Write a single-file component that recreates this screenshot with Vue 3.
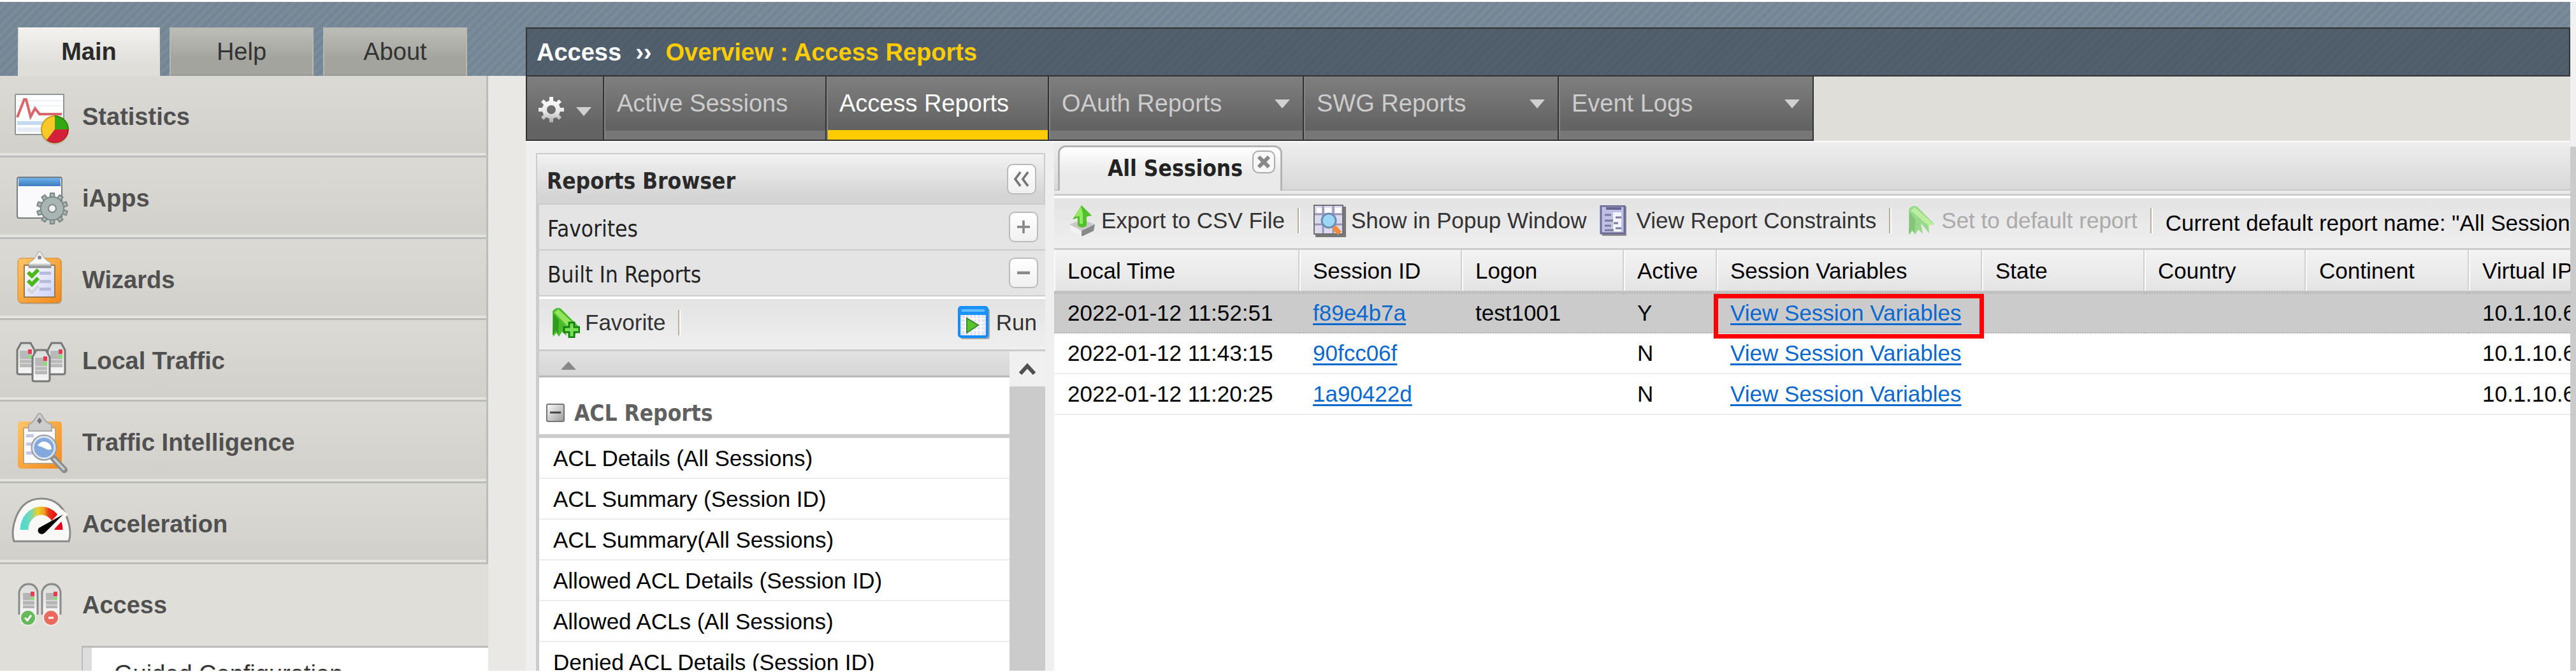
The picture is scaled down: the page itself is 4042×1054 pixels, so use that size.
<script setup>
const tabs = ['Main', 'Help', 'About']
const menu = [
  { id: 'statistics', label: 'Statistics' },
  { id: 'iapps', label: 'iApps' },
  { id: 'wizards', label: 'Wizards' },
  { id: 'local', label: 'Local Traffic' },
  { id: 'intelligence', label: 'Traffic Intelligence' },
  { id: 'acceleration', label: 'Acceleration' },
  { id: 'access', label: 'Access' }
]
const nav = [
  { label: 'Active Sessions' },
  { label: 'Access Reports', current: true },
  { label: 'OAuth Reports', menu: true },
  { label: 'SWG Reports', menu: true },
  { label: 'Event Logs', menu: true }
]
const reports = [
  'ACL Details (All Sessions)',
  'ACL Summary (Session ID)',
  'ACL Summary(All Sessions)',
  'Allowed ACL Details (Session ID)',
  'Allowed ACLs (All Sessions)',
  'Denied ACL Details (Session ID)'
]
const columns = [
  { label: 'Local Time', width: 385 },
  { label: 'Session ID', width: 255 },
  { label: 'Logon', width: 254 },
  { label: 'Active', width: 146 },
  { label: 'Session Variables', width: 416 },
  { label: 'State', width: 255 },
  { label: 'Country', width: 253 },
  { label: 'Continent', width: 256 },
  { label: 'Virtual IP', width: 255 }
]
const sessions = [
  { time: '2022-01-12 11:52:51', id: 'f89e4b7a', logon: 'test1001', active: 'Y', ip: '10.1.10.6', selected: true },
  { time: '2022-01-12 11:43:15', id: '90fcc06f', logon: '', active: 'N', ip: '10.1.10.6' },
  { time: '2022-01-12 11:20:25', id: '1a90422d', logon: '', active: 'N', ip: '10.1.10.6' }
]
const smallTeeth = [0, 36, 72, 108, 144, 180, 216, 252, 288, 324]
</script>

<template>
  <div class="page">
    <aside class="sidebar">
      <div class="tabs">
        <button v-for="(t, i) in tabs" :key="t" type="button" class="tab" :class="{ active: i === 0 }">{{ t }}</button>
      </div>
      <nav class="menu">
        <a v-for="m in menu" :key="m.id" href="#" class="row" :class="{ open: m.id === 'access' }">
          <svg class="micon" viewBox="0 3 96 96" aria-hidden="true">
            <defs>
              <linearGradient id="board" x1="0" y1="0" x2="1" y2="1"><stop offset="0" stop-color="#ffc567" /><stop offset="1" stop-color="#f08a1c" /></linearGradient>
              <linearGradient id="metal" x1="0" y1="0" x2="0" y2="1"><stop offset="0" stop-color="#e9e9e9" /><stop offset=".7" stop-color="#fafafa" /><stop offset="1" stop-color="#777" /></linearGradient>
              <linearGradient id="server" x1="0" y1="0" x2="0" y2="1"><stop offset="0" stop-color="#d9dada" /><stop offset="1" stop-color="#f6f6f6" /></linearGradient>
              <linearGradient id="paper" x1="0" y1="0" x2="1" y2="1"><stop offset="0" stop-color="#fff" /><stop offset="1" stop-color="#ced2f6" /></linearGradient>
              <linearGradient id="sky" x1="0" y1="0" x2="0" y2="1"><stop offset="0" stop-color="#70b1ec" /><stop offset="1" stop-color="#3b7cc0" /></linearGradient>
              <linearGradient id="dial" x1="0" y1="0" x2="1" y2="0"><stop offset="0" stop-color="#55d8cf" /><stop offset=".2" stop-color="#7cd8b0" /><stop offset=".4" stop-color="#ecd02a" /><stop offset=".58" stop-color="#f0a020" /><stop offset=".7" stop-color="#e83a18" /><stop offset="1" stop-color="#e2001a" /></linearGradient>
            </defs>
            <template v-if="m.id === 'statistics'">
              <rect x="6" y="16" width="76" height="63" rx="1" fill="#fdfefe" stroke="#8f9496" stroke-width="2" />
              <path d="M9 58h70v6H9z" fill="#c5daee" /><path d="M9 68h60v7H9z" fill="#e6ecf5" /><path d="M9 26h70M9 34h70" stroke="#eef2f5" stroke-width="2" />
              <path d="M9 52 20 24h3l7 27 7-13 7 9h35" fill="none" stroke="#d9666b" stroke-width="4" />
              <circle cx="68" cy="73" r="22" fill="#999" opacity=".4" />
              <circle cx="68" cy="71" r="22" fill="#f6c928" />
              <path d="M68 71V49a22 22 0 0 1 22 22z" fill="#35a614" />
              <path d="M68 71h22a22 22 0 0 1-35 17z" fill="#d5203a" />
              <circle cx="68" cy="71" r="21" fill="none" stroke="#00000033" stroke-width="2" />
            </template>
            <template v-else-if="m.id === 'iapps'">
              <rect x="9" y="18" width="70" height="64" rx="3" fill="#fafafc" stroke="#777c80" stroke-width="2" />
              <path d="M11 19h66v13H11z" fill="url(#sky)" />
              <g transform="translate(64 67)" fill="#a9b5b3" stroke="#7b8785" stroke-width="2">
                <path v-for="a in smallTeeth" :key="a" d="M-4 -14 -3 -24h6L4 -14z" :transform="`rotate(${a})`" />
                <circle r="18" /><circle r="17" stroke="none" /><circle r="6" fill="#f0f1f3" />
              </g>
            </template>
            <template v-else-if="m.id === 'wizards'">
              <rect x="11" y="18" width="68" height="71" rx="6" fill="#777" opacity=".4" />
              <rect x="10" y="17" width="68" height="70" rx="6" fill="url(#board)" stroke="#d8821f" stroke-width="1" />
              <path d="M20 28h48v50H20z" fill="url(#paper)" stroke="#9b7a4a" stroke-width="2" />
              <path d="M44 38h18v5H44zM44 51h18v5H44zM44 63h18v5H44z" fill="#b7bbdc" />
              <path d="m26 39 6 6 10-10M26 52l6 6 10-10" fill="none" stroke="#4cb81c" stroke-width="6" /><path d="m26 65 6 6 10-10" fill="none" stroke="#d3d4dc" stroke-width="4" />
              <path d="M27 32V24q8-3 13-13 4-9 8 0 5 10 14 13v8z" fill="url(#metal)" stroke="#999" /><circle cx="44" cy="16" r="3" fill="#888" />
            </template>
            <template v-else-if="m.id === 'local'">
              <g v-for="(p, i) in [[8, 22], [56, 22], [32, 33]]" :key="i" :transform="`translate(${p[0]} ${p[1]})`">
                <path d="M1 12 7 1h15l6 11v35q0 3-3 3H4q-3 0-3-3z" fill="url(#server)" stroke="#777" stroke-width="3" />
                <path d="M5 13h19v26H5z" fill="#b9b9b9" /><path d="M5 27h19M5 33h19" stroke="#d4d4d4" stroke-width="2" />
                <path d="M18 11h6v7h-6z" fill="#e83a50" /><path d="M18 20h6v5h-6z" fill="#87e070" />
              </g>
            </template>
            <template v-else-if="m.id === 'intelligence'">
              <rect x="10" y="18" width="69" height="74" rx="5" fill="url(#board)" />
              <path d="M19 28h50v56H19z" fill="#fbfbfd" stroke="#bfa57a" stroke-width="2" />
              <path d="M23 38h12v5H23zM23 51h12v5H23zM23 65h12v5H23z" fill="#c5c8e4" />
              <path d="M27 33V23q8-4 13-14 4-7 8 0 5 11 15 14v10z" fill="#cdcdcd" stroke="#aaa" stroke-width="2" /><path d="m44 12 4 5-4 5-4-5z" fill="#777" />
              <path d="m65 75 18 19" stroke="#888c8c" stroke-width="10" stroke-linecap="round" /><path d="m66 76 17 18" stroke="#c8caca" stroke-width="4" />
              <circle cx="51" cy="59" r="19" fill="#82a8dc" stroke="#999" stroke-width="3" /><circle cx="51" cy="59" r="17" fill="none" stroke="#d8e3f0" stroke-width="3" />
              <path d="M41 56a12 14 0 0 1 22 5q-4 3-9 0t-13-5z" fill="#fff" />
            </template>
            <template v-else-if="m.id === 'acceleration'">
              <path d="M4 78Q0 66 4 50 14 11 47 11t43 39q4 16 0 28z" fill="#f8f8f6" stroke="#8a8a8a" stroke-width="3" />
              <path d="M20 60a27 30 0 0 1 54 0" fill="none" stroke="url(#dial)" stroke-width="13" />
              <path d="M60 58 84 32" stroke="#f8f8f6" stroke-width="12" />
              <path d="M43 57 81 36 53 64q-5 5-10 1-3-4 0-8z" fill="#000" />
            </template>
            <template v-else>
              <g v-for="(x, i) in [11, 47]" :key="i" :transform="`translate(${x} 17)`">
                <path d="M1 49V13Q5 1 16 1t14 12v36z" fill="url(#server)" /><path d="M1 49V13Q5 1 16 1t14 12v36" fill="none" stroke="#8a8a8a" stroke-width="3" />
                <path d="M7 15h18v24H7z" fill="#b5b5b5" /><path d="M7 27h18M7 34h18" stroke="#d4d4d4" stroke-width="2" />
                <path d="M19 13h6v7h-6z" fill="#e83a50" /><path d="M19 22h6v4h-6z" fill="#87e070" />
                <circle cx="15" cy="54" r="12" :fill="i ? '#ea6a5e' : '#66b85a'" stroke="#eeeeea" stroke-width="2" />
                <path :d="i ? 'M11 54h8' : 'm10 54 4 4 6-8'" fill="none" stroke="#fff" stroke-width="3" />
              </g>
            </template>
          </svg>
          <span>{{ m.label }}</span>
        </a>
        <div class="submenu"><a href="#">Guided Configuration</a></div>
      </nav>
    </aside>

    <main class="content">
      <h1 class="crumb"><span>Access</span><span class="sep">››</span><span class="here">Overview : Access Reports</span></h1>
      <nav class="nav">
        <button type="button" class="gear" aria-label="Options">
          <svg class="cog" viewBox="-20 -20 40 40" aria-hidden="true">
            <defs><linearGradient id="silver" x1="0" y1="-20" x2="0" y2="20" gradientUnits="userSpaceOnUse"><stop offset="0" stop-color="#fff" /><stop offset=".6" stop-color="#e6e6e6" /><stop offset="1" stop-color="#a8a8a8" /></linearGradient></defs>
            <path d="M-3-20h6v6l5 2 4-4 4 4-4 4 2 5h6v6h-6l-2 5 4 4-4 4-4-4-5 2v6h-6v-6l-5-2-4 4-4-4 4-4-2-5h-6v-6h6l2-5-4-4 4-4 4 4 5-2zM0-7a7 7 0 1 0 0 14 7 7 0 0 0 0-14z" fill="url(#silver)" fill-rule="evenodd" />
          </svg>
          <span class="caret"></span>
        </button>
        <a v-for="n in nav" :key="n.label" href="#" class="item" :class="{ current: n.current, wide: n.menu }">
          <span>{{ n.label }}</span><span v-if="n.menu" class="caret"></span>
        </a>
      </nav>

      <div class="body">
        <section class="browser">
          <header class="bhead">
            <h2>Reports Browser</h2>
            <button type="button" class="tool" aria-label="Collapse panel"><svg viewBox="0 0 46 48"><path d="M21 12 12 24l9 12M34 12l-9 12 9 12" fill="none" stroke="#777" stroke-width="4" /></svg></button>
          </header>
          <div class="frame">
            <div class="fold"><span>Favorites</span><button type="button" class="tool" aria-label="Expand Favorites"><svg viewBox="0 0 46 48"><path d="M12 24h22M23 13v22" stroke="#888" stroke-width="4" /></svg></button></div>
            <div class="fold"><span>Built In Reports</span><button type="button" class="tool" aria-label="Collapse Built In Reports"><svg viewBox="0 0 46 48"><path d="M12 24h22" stroke="#888" stroke-width="5" /></svg></button></div>
            <div class="ftools">
              <button type="button" class="tbtn">
                <svg class="i44" viewBox="0 0 44 48" aria-hidden="true">
                  <path d="M1 6q6-7 13-4l27 27-5 15-16-16 3 17-7-7-5 8-4-6-5 6z" fill="#4dbb2b" /><path d="M10 3 40 31l-5 10L4 8z" fill="#93e55f" /><path d="M2 10 1 44l5-8 4 6 1-22z" fill="#2f9c1c" />
                  <path d="M27 24h8v7h8v8h-8v8h-8v-8h-8v-8h8z" fill="#7be05a" stroke="#14820f" stroke-width="3" />
                </svg>Favorite
              </button>
              <span class="bar"></span>
              <button type="button" class="tbtn run">
                <svg class="i52" viewBox="0 0 52 52" aria-hidden="true">
                  <rect x="4" y="4" width="46" height="48" rx="4" fill="#777" opacity=".6" />
                  <rect x="2" y="2" width="44" height="46" rx="3" fill="#e5e2f6" stroke="#0f8dfb" stroke-width="4" /><path d="M2 2h44v12H2z" fill="#1c93f8" /><path d="M6 5h36v4H6z" fill="#67bcff" />
                  <path d="M6 20h36M6 26h36M6 32h36M6 38h36M12 14v32M18 14v32M24 14v32M30 14v32M36 14v32" stroke="#fff" stroke-width="2" />
                  <path d="M14 19 32 30 14 42z" fill="#58c428" stroke="#3a8a3a" stroke-width="2" />
                </svg>Run
              </button>
            </div>
            <div class="list">
              <div class="items">
                <div class="sorter"><span class="up"></span></div>
                <h3 class="group"><svg viewBox="0 0 30 30" aria-hidden="true"><defs><linearGradient id="knob" x1="0" y1="0" x2="1" y2="1"><stop offset="0" stop-color="#fff" /><stop offset="1" stop-color="#999" /></linearGradient></defs><rect x="1" y="1" width="27" height="27" rx="2" fill="url(#knob)" stroke="#777" stroke-width="2" /><path d="M6 14h17" stroke="#444" stroke-width="3" /></svg>ACL Reports</h3>
                <ul><li v-for="r in reports" :key="r">{{ r }}</li></ul>
              </div>
              <div class="scroll"><span class="arrow"><svg viewBox="0 0 26 20" aria-hidden="true"><path d="M2 17 13 5l11 12" fill="none" stroke="#505050" stroke-width="6" /></svg></span><span class="thumb"></span></div>
            </div>
          </div>
        </section>

        <section class="view">
          <div class="strip">
            <div class="doc"><button type="button" class="title">All Sessions</button><button type="button" class="close" aria-label="Close tab"><svg viewBox="0 0 36 36"><rect x="1" y="1" width="34" height="34" rx="9" fill="#f8f8f8" stroke="#aaa" stroke-width="2" /><path d="m10 10 16 16M26 10 10 26" stroke="#888" stroke-width="6" /></svg></button></div>
          </div>
          <div class="under"></div>
          <div class="toolbar">
            <button type="button" class="tbtn">
              <svg class="i44" viewBox="0 0 44 48" aria-hidden="true">
                <path d="M2 30 22 22l20 8-2 10-19 9L4 40z" fill="#c9c9c9" /><path d="M2 30 21 40v9L4 40z" fill="#f2f2f2" /><path d="m21 40 21-10-2 10-19 9z" fill="#888" />
                <path d="M21 0 37 16l-8 2v14q-7 6-14 0V20l-8 2z" fill="#55c02e" /><path d="M20 2 10 18l8-1v12h5V12z" fill="#93ea63" />
              </svg>Export to CSV File
            </button>
            <span class="bar"></span>
            <button type="button" class="tbtn">
              <svg class="i52" viewBox="0 0 52 52" aria-hidden="true">
                <path d="M4 4h48v48H4z" fill="#777" /><path d="M2 2h45v45H2z" fill="#dcdaf0" stroke="#707070" stroke-width="2" />
                <path d="M16 3v43M32 3v43M3 16h43M3 32h43" stroke="#9995b5" stroke-width="3" /><path d="M6 6h8v8H6zM19 6h10v8H19zM35 6h9v8h-9z" fill="#fff" />
                <circle cx="25" cy="26" r="11" fill="#9bd8f7" stroke="#6c8dad" stroke-width="3" /><path d="m33 36 9 10" stroke="#f08b3c" stroke-width="8" />
              </svg>Show in Popup Window
            </button>
            <button type="button" class="tbtn">
              <svg class="i50" viewBox="0 2 50 48" aria-hidden="true">
                <path d="M4 4h38v46H4z" fill="#777" opacity=".8" /><path d="M2 3h37v43H2z" fill="#bfbfe8" stroke="#6a6a92" stroke-width="3" /><path d="M21 13h13v30H21z" fill="#f3f3fb" />
                <path d="M10 7h24" stroke="#66668c" stroke-width="4" /><path d="M8 17h10M8 26h13M8 34h10M8 41h14M25 21h9M22 30h7M25 38h9" stroke="#7a7a9c" stroke-width="3" />
              </svg>View Report Constraints
            </button>
            <span class="bar"></span>
            <button type="button" class="tbtn" disabled>
              <svg class="i50" viewBox="-6 0 50 48" aria-hidden="true">
                <path d="M1 6q6-7 13-4l27 27-9 2 1 13-13-16 3 17-7-7-5 8-4-6-5 6z" fill="#97d98a" /><path d="M10 3 41 30l-9 2L4 8z" fill="#bdee9f" /><path d="M2 10 1 46l5-8 4 6 1-22z" fill="#84c57a" />
              </svg>Set to default report
            </button>
            <span class="bar"></span>
            <span class="note">Current default report name: "All Sessions"</span>
          </div>
          <div class="gridwrap">
            <table class="grid">
              <colgroup><col v-for="c in columns" :key="c.label" :style="{ width: c.width + 'px' }" /></colgroup>
              <thead><tr><th v-for="c in columns" :key="c.label" scope="col">{{ c.label }}</th></tr></thead>
              <tbody>
                <tr v-for="s in sessions" :key="s.id" :class="{ selected: s.selected }">
                  <td>{{ s.time }}</td>
                  <td><a href="#">{{ s.id }}</a></td>
                  <td>{{ s.logon }}</td>
                  <td>{{ s.active }}</td>
                  <td class="vars"><a href="#">View Session Variables</a><span v-if="s.selected" class="mark"></span></td>
                  <td></td><td></td><td></td>
                  <td>{{ s.ip }}</td>
                </tr>
              </tbody>
            </table>
          </div>
        </section>
      </div>
    </main>
    <div class="pagebar"><span></span></div>
  </div>
</template>

<style>
body { margin: 0; background: #fff; }
</style>

<style scoped>
* { box-sizing: border-box; }
button { font: inherit; color: inherit; border: 0; background: none; padding: 0; margin: 0; }
a { color: inherit; text-decoration: none; }
h1, h2, h3, ul { margin: 0; padding: 0; font: inherit; list-style: none; }
svg { display: block; flex: none; }

.page {
  display: flex;
  height: 100vh;
  border-top: 3px solid #fff;
  border-bottom: 2px solid #fff;
  overflow: hidden;
  white-space: nowrap;
  font: 35px/44px "Liberation Sans", Arial, sans-serif;
  color: #000;
  background: repeating-linear-gradient(135deg, #748595 0 5px, #7a8b9a 5px 10px) 0 0 / 100% 116px no-repeat, #e9e8e4;
}

/* left menu */
.sidebar { width: 825px; flex: none; display: flex; flex-direction: column; font-size: 38px; }
.tabs { height: 116px; flex: none; padding: 40px 0 0 28px; display: flex; gap: 15px; }
.tab { width: 226px; color: #333; background: linear-gradient(#bdbdb8, #a3a49d 65%); border: 2px solid #b8b8b3; border-bottom-color: #999a94; }
.tab.active { width: 223px; font-weight: bold; color: #2a2a2a; background: linear-gradient(#f2f1ef, #dfded9 80%); border-color: #f4f4f2 #dfded9 #dfded9; }
.menu { width: 766px; flex: 1; background: #dfded9; overflow: hidden; }
.row { display: flex; align-items: center; gap: 15px; height: 128px; padding: 3px 0 0 18px; font-weight: bold; color: #505050; background: linear-gradient(#dbdad5, #d1d0cb); border-right: 3px solid #bcbcbc; border-bottom: 3px solid #bcbcbc; box-shadow: inset 0 -4px #e3e3df; }
.row:nth-child(3n) { height: 127px; }
.row.open { background: none; border-color: transparent; box-shadow: none; }
.micon { width: 96px; height: 96px; }
.submenu { margin-left: 128px; background: #fff; border-top: 3px solid #bcbcbc; border-left: 2px solid #bcbcbc; box-shadow: inset 14px 0 #ddd; }
.submenu a { display: block; padding-left: 49px; line-height: 82px; color: #333; }

/* right side */
.content { flex: 1; min-width: 0; display: flex; flex-direction: column; padding-top: 40px; }
.crumb { height: 77px; flex: none; display: flex; align-items: center; padding: 0 0 0 15px; font-size: 38px; font-weight: bold; color: #fff; background: rgba(42, 54, 66, .5); border: 2px solid #333; }
.sep { margin: 0 22px; }
.here { color: #fc0; }
.nav { height: 101px; flex: none; display: flex; font-size: 38px; color: #ccc; background: #dfded9; }
.gear { width: 123px; display: flex; align-items: center; gap: 19px; padding: 4px 0 0 18px; border: 2px solid #333; border-top: 0; background: linear-gradient(#7f7f7f, #636363 80%); }
.cog { width: 40px; height: 40px; }
.gear .caret { margin-top: 6px; }
.item { width: 349px; display: flex; justify-content: space-between; align-items: center; padding: 0 20px 2px 20px; border: solid #333; border-width: 0 2px 2px 0; background: linear-gradient(#777, #777) 0 100% / 100% 14px no-repeat, linear-gradient(#7f7f7f, #636363 80%); box-shadow: inset 2px 0 #848484; }
.item span:first-child { padding-bottom: 14px; }
.item .caret { margin-bottom: 12px; }
.item.wide { width: 400px; }
.item.current { color: #fff; background: linear-gradient(#fc0, #fc0) 0 100% / 100% 15px no-repeat, linear-gradient(#7f7f7f, #636363 80%); }
.caret { border: solid transparent; border-width: 14px 12px 0; border-top-color: #d0d0d0; }
.body { flex: 1; min-height: 0; display: flex; background: #efefef; border-top: 2px solid #fafafa; }

/* reports browser */
.browser { width: 799px; flex: none; margin: 17px 14px 0 16px; display: flex; flex-direction: column; font-size: 35px; }
.bhead, .fold { font-family: "DejaVu Sans Condensed", "DejaVu Sans", sans-serif; display: flex; justify-content: space-between; align-items: center; }
.bhead { height: 81px; flex: none; padding: 0 12px 0 15px; color: #2a2a2a; background: linear-gradient(#f2f2f2, #d4d4d4 85%); border: 2px solid #ccc; }
.bhead h2 { font-weight: bold; padding-top: 6px; }
.tool { width: 46px; height: 48px; border: 2px solid #bbb; border-radius: 9px; background: linear-gradient(#fff, #f0f0f0); display: flex; align-items: center; justify-content: center; }
.frame { flex: 1; min-height: 0; border-left: 5px solid #ccc; display: flex; flex-direction: column; }
.fold { height: 72px; flex: none; padding: 0 11px 0 13px; color: #222; background: #e4e4e4; border-bottom: 2px solid #ccc; }
.fold span { padding-top: 6px; }
.ftools { height: 86px; flex: none; display: flex; align-items: center; gap: 20px; padding: 0 13px 6px 20px; background: linear-gradient(#e3e3e3, #efefef); border-top: 4px solid #fff; border-bottom: 3px solid #ccc; }
.tbtn { display: flex; align-items: center; gap: 8px; flex: none; font-size: 35px; color: #333; }
.tbtn:disabled { color: #aaa; }
.run { margin-left: auto; }
.i44 { width: 44px; height: 48px; }
.i50 { width: 50px; height: 48px; }
.i52 { width: 52px; height: 52px; }
.bar { width: 4px; height: 40px; flex: none; background: #b9b09c; border-right: 2px solid #fff; }
.list { flex: 1; min-height: 0; display: flex; overflow: hidden; }
.items { flex: 1; min-width: 0; background: #fff; overflow: hidden; }
.sorter { height: 41px; padding: 16px 0 0 34px; background: linear-gradient(#e2e2e2, #d6d6d6); border-bottom: 3px solid #b8b8b8; }
.up { display: block; width: 24px; border: solid transparent; border-width: 0 12px 13px; border-bottom-color: #888; }
.group { height: 95px; display: flex; align-items: center; gap: 14px; padding: 22px 0 0 11px; font-family: "DejaVu Sans Condensed", "DejaVu Sans", sans-serif; font-weight: bold; color: #606060; border-bottom: 6px solid #ccc; }
.group svg { width: 30px; height: 30px; }
li { height: 64px; padding: 10px 0 0 22px; border-bottom: 2px solid #ededed; }
.scroll { width: 56px; flex: none; display: flex; flex-direction: column; background: #f0f0f0; }
.arrow { height: 55px; display: flex; align-items: center; justify-content: center; }
.arrow svg { width: 26px; height: 20px; }
.thumb { flex: 1; background: #cbcbcb; }

/* report view */
.view { flex: 1; min-width: 0; display: flex; flex-direction: column; background: #fff; }
.strip { height: 76px; flex: none; padding: 5px 0 0 6px; background: linear-gradient(#eee, #d8d8d8); border-bottom: 2px solid #c8c8c8; }
.doc { width: 352px; height: 71px; display: flex; justify-content: flex-end; gap: 15px; padding-right: 8px; border: 3px solid #b4b4b4; border-bottom: 0; border-radius: 12px 12px 0 0; background: linear-gradient(#fff, #eaeaea 60%); }
.title { font: bold 35px/44px "DejaVu Sans Condensed", "DejaVu Sans", sans-serif; color: #222; padding-bottom: 2px; }
.close { width: 36px; height: 36px; margin-top: 5px; }
.close svg { width: 36px; height: 36px; }
.under { height: 8px; flex: none; background: #eaeaea; border-bottom: 3px solid #ccc; }
.toolbar { height: 85px; flex: none; display: flex; align-items: center; gap: 20px; padding: 0 0 8px 22px; overflow: hidden; background: linear-gradient(#e3e3e3, #efefef); border-top: 4px solid #fff; border-bottom: 3px solid #ccc; }
.note { padding-top: 8px; flex: none; }
.gridwrap { overflow: hidden; }
.grid { table-layout: fixed; width: 2475px; border-collapse: separate; border-spacing: 0; }
th, td { padding: 0 0 0 21px; text-align: left; font-weight: normal; overflow: hidden; }
th { height: 67px; padding-top: 2px; background: linear-gradient(#f3f3f3, #e4e4e4); border-right: 2px solid #d0d0d0; border-bottom: 3px solid #c2c2c2; box-shadow: inset 2px 0 #fafafa; }
td { height: 64px; border-bottom: 2px solid #ededed; }
td a { color: #0a68cf; text-decoration: underline 3px; text-underline-offset: 4px; text-decoration-skip-ink: none; }
.selected td { background: #cbcbcb; border-top: 2px dotted #b4b4b4; border-bottom: 2px dotted #b4b4b4; }
.vars { position: relative; overflow: visible; }
.mark { position: absolute; inset: 0 -3px -10px -5px; border: 7px solid #f00; }

.pagebar { width: 9px; flex: none; background: #f1f1f1; display: flex; flex-direction: column; padding-top: 227px; }
.pagebar span { flex: 1; background: #cbcbcb; }
</style>
